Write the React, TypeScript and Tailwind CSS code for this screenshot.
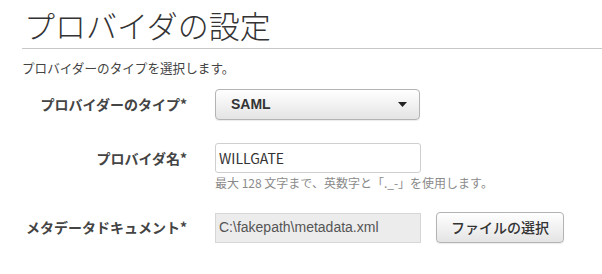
const jp = "font-['Noto_Sans_CJK_JP','Liberation_Sans',sans-serif]"

export default function App() {
  return (
    <div className={`w-[602px] h-[274px] bg-white text-[#333] ${jp}`}>
      <h1 className="pl-[24px] pt-[5px] text-[31px] leading-[40px] font-light text-[#333]">
        プロバイダの設定
      </h1>
      <div className="ml-[22px] mt-[3px] border-t border-[#c8c8c8]" />
      <p className="pl-[22px] mt-[11px] text-[12.6px] leading-[16px] text-[#444]">
        プロバイダーのタイプを選択します。
      </p>

      <div className="mt-[13px] grid grid-cols-[187px_1fr] gap-x-[28px]">
        {/* provider type */}
        <label className="self-center text-right text-[14px] font-semibold text-[#444]">
          プロバイダーのタイプ*
        </label>
        <div className="w-[205px] h-[31px] flex items-center justify-between pl-[15px] pr-[12px] rounded-[4px] border border-[#b4b4b4] bg-gradient-to-b from-white to-[#e4e4e4] shadow-[0_1px_1px_rgba(0,0,0,0.08)]">
          <span className="font-['Liberation_Sans',sans-serif] text-[14px] font-bold text-[#333]">
            SAML
          </span>
          <svg width="9" height="5" viewBox="0 0 9 5">
            <path d="M0 0h9L4.5 5z" fill="#222" />
          </svg>
        </div>

        {/* provider name */}
        <label className="mt-[23px] self-center text-right text-[14px] font-semibold text-[#444]">
          プロバイダ名*
        </label>
        <div className="mt-[23px]">
          <div className="w-[206px] h-[30px] flex items-center px-[3px] rounded-[3px] border border-[#cfcfcf] bg-white">
            <span className="text-[14px] text-[#333]">WILLGATE</span>
          </div>
        </div>
        <div />
        <p className="mt-[3px] text-[12px] leading-[14px] text-[#8a8a8a]">
          最大 128 文字まで、英数字と「._-」を使用します。
        </p>

        {/* metadata */}
        <label className="mt-[22px] self-center text-right text-[14px] font-semibold text-[#444]">
          メタデータドキュメント*
        </label>
        <div className="mt-[22px] flex items-center gap-[15px]">
          <div className="w-[206px] h-[30px] flex items-center px-[3px] border border-[#d6d6d6] bg-[#ececec]">
            <span className="font-['Liberation_Sans',sans-serif] text-[14px] text-[#555]">
              C:\fakepath\metadata.xml
            </span>
          </div>
          <button className="w-[128px] h-[31px] rounded-[4px] border border-[#b4b4b4] bg-gradient-to-b from-white to-[#e4e4e4] text-[14px] font-medium text-[#333] shadow-[0_1px_1px_rgba(0,0,0,0.08)]">
            ファイルの選択
          </button>
        </div>
      </div>
    </div>
  )
}
